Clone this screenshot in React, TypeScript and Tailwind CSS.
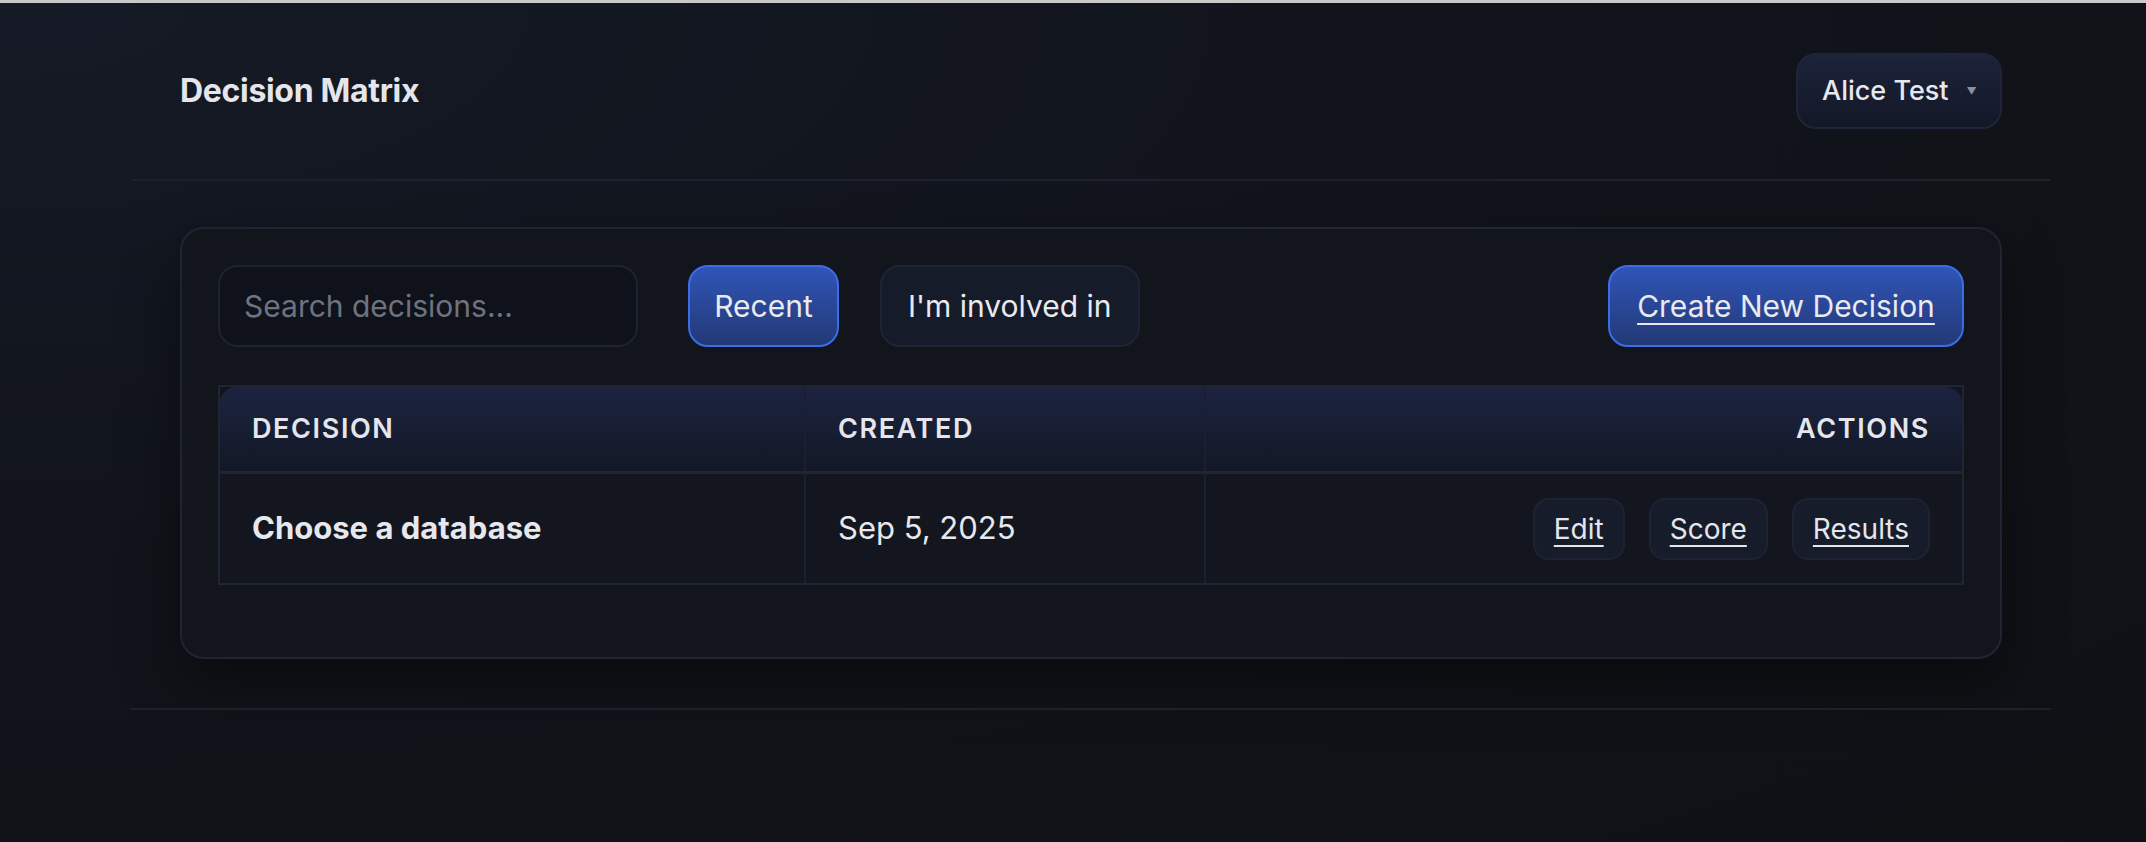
const font = "font-['Inter','Liberation_Sans',sans-serif]";

function Header() {
  return (
    <header className="flex h-[176px] items-center justify-between px-[49px]">
      <h1 className="text-[32px] font-bold tracking-[-0.01em] text-[#e4e6ec]">
        Decision Matrix
      </h1>
      <button className="flex h-[76px] w-[206px] items-center gap-[18px] rounded-[20px] border-2 border-[#1e2536] bg-gradient-to-b from-[#1c233a] to-[#131827] pl-[24px] text-[27px] font-medium text-[#e6e8ee]">
        Alice Test
        <span className="text-[10px] text-[#8a90a0]">▼</span>
      </button>
    </header>
  );
}

function Toolbar() {
  return (
    <div className="flex items-center">
      <div className="flex h-[82px] w-[420px] items-center rounded-[20px] border-2 border-[#1e2331] bg-[#0f121a] px-[24px] text-[30px] text-[#6e7380]">
        Search decisions...
      </div>
      <button className="ml-[50px] h-[82px] w-[151px] rounded-[20px] border-2 border-[#3a6ee8] bg-gradient-to-b from-[#3055b8] to-[#233977] text-[30px] text-[#e8eaf0]">
        Recent
      </button>
      <button className="ml-[41px] h-[82px] rounded-[20px] border-2 border-[#1e2435] bg-[#161b2a] px-[26px] text-[30px] text-[#e8eaf0]">
        I'm involved in
      </button>
      <button className="ml-auto h-[82px] w-[356px] rounded-[20px] border-2 border-[#3a6ee8] bg-gradient-to-b from-[#3055b8] to-[#233977] text-[30px] text-[#e8eaf0] underline decoration-2 underline-offset-[6px]">
        Create New Decision
      </button>
    </div>
  );
}

function ActionButton({ label }: { label: string }) {
  return (
    <button className="h-[62px] rounded-[16px] border-2 border-[#1d2333] bg-[#171c2b] px-[19px] text-[28px] text-[#e4e6ec] underline decoration-2 underline-offset-[6px]">
      {label}
    </button>
  );
}

function DecisionTable() {
  return (
    <div className="mt-[38px] border-2 border-[#1f2535]">
      <div className="grid grid-cols-[586px_400px_1fr] rounded-t-[16px] bg-gradient-to-b from-[#1c2340] to-[#131826] text-[27px] font-semibold uppercase tracking-[0.06em] text-[#e4e6ec]">
        <div className="flex h-[84px] items-center border-r-2 border-[#1b2030] px-[32px]">Decision</div>
        <div className="flex h-[84px] items-center border-r-2 border-[#1b2030] px-[32px]">Created</div>
        <div className="flex h-[84px] items-center justify-end px-[32px]">Actions</div>
      </div>
      <div className="grid grid-cols-[586px_400px_1fr] border-t-[3px] border-[#1f2535] bg-[#13161e] text-[31px] text-[#e6e8ee]">
        <div className="flex h-[109px] items-center border-r-2 border-[#1b2030] px-[32px] font-bold">
          Choose a database
        </div>
        <div className="flex h-[109px] items-center border-r-2 border-[#1b2030] px-[32px]">Sep 5, 2025</div>
        <div className="flex h-[109px] items-center justify-end gap-[24px] px-[32px]">
          <ActionButton label="Edit" />
          <ActionButton label="Score" />
          <ActionButton label="Results" />
        </div>
      </div>
    </div>
  );
}

export default function App() {
  return (
    <div
      className={`${font} min-h-[842px] border-t-[3px] border-[#c9c9c9] bg-[#0f1116] bg-[radial-gradient(ellipse_at_0%_0%,#151a26_0%,#11141b_45%,#0f1115_100%)]`}
    >
      <div className="ml-[131px] w-[1920px]">
        <Header />
        <div className="h-[2px] bg-[#1c212d]" />
        <main className="px-[49px] pb-[49px] pt-[46px]">
          <section className="rounded-[24px] border-2 border-[#1f2533] bg-[#12151c] px-[36px] pb-[72px] pt-[36px] shadow-[0_24px_60px_rgba(0,0,0,0.45)]">
            <Toolbar />
            <DecisionTable />
          </section>
        </main>
        <div className="h-[2px] bg-[#1c212d]" />
      </div>
    </div>
  );
}
